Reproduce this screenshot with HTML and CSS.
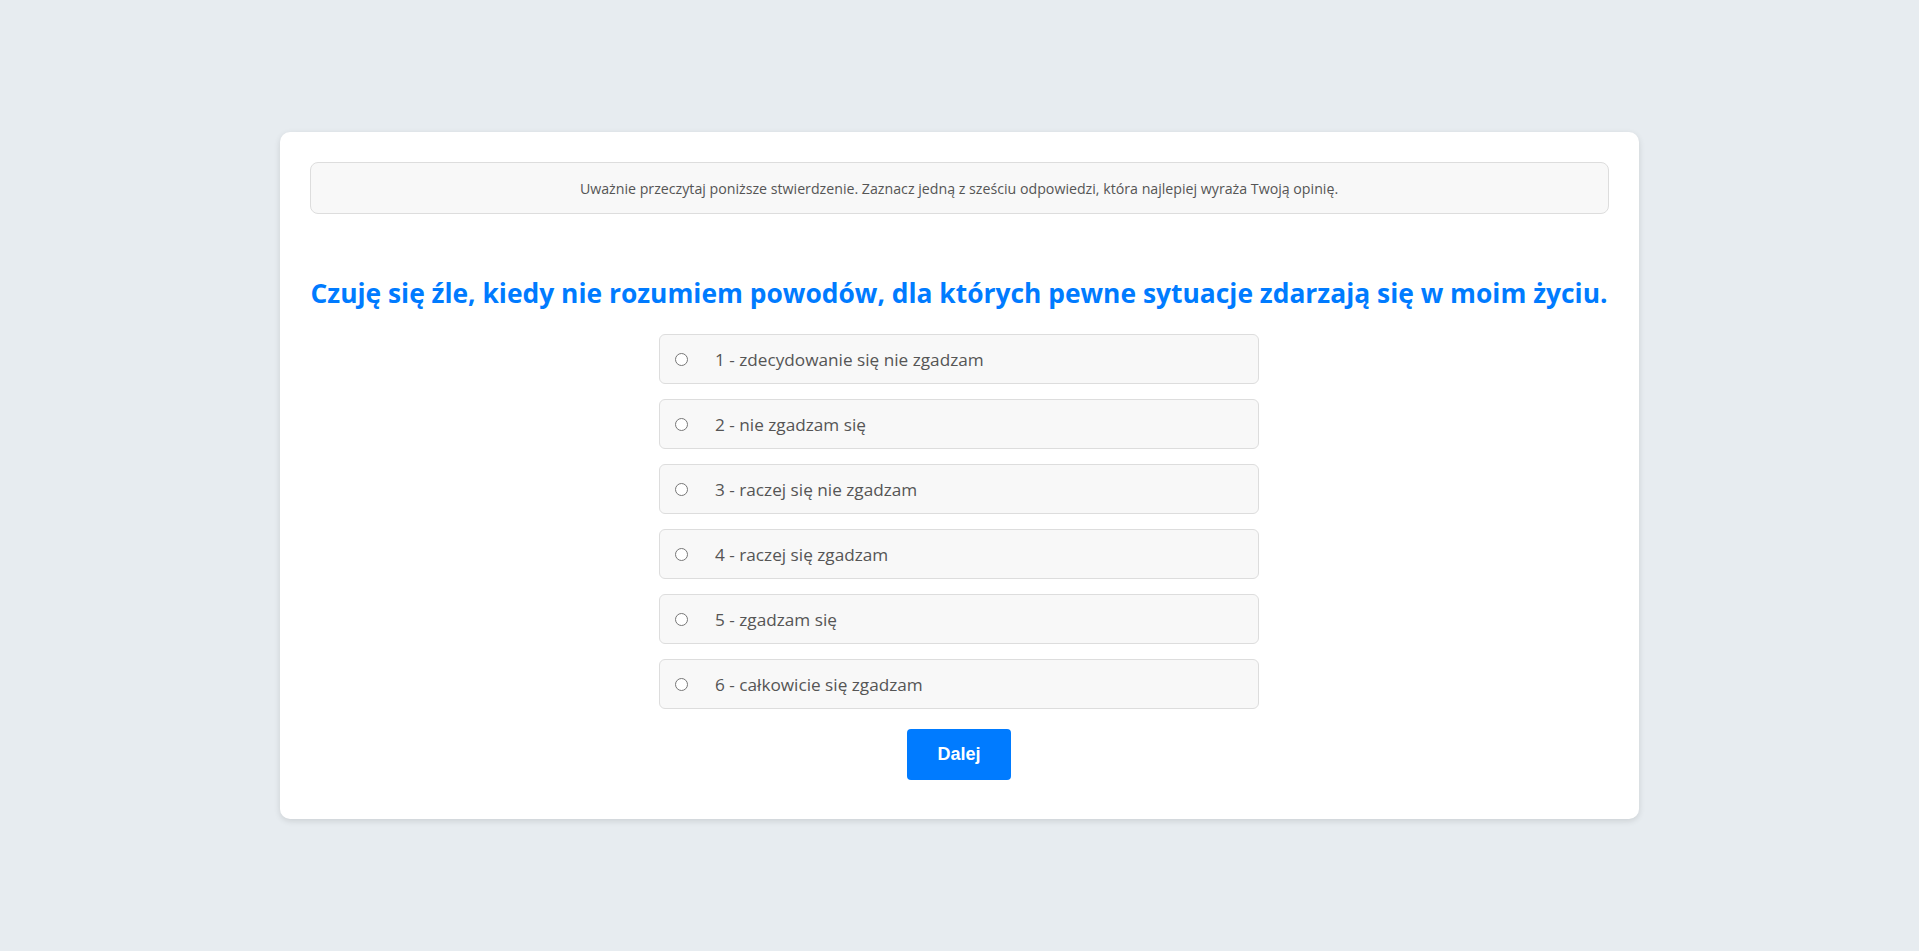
FILE: index.html
```html
<!DOCTYPE html>
<html lang="pl">
<head>
<meta charset="utf-8">
<title>Ankieta</title>
<link rel="stylesheet" href="styles.css">
</head>
<body>
<main class="card">
  <div class="notice">Uważnie przeczytaj poniższe stwierdzenie. Zaznacz jedną z sześciu odpowiedzi, która najlepiej wyraża Twoją opinię.</div>
  <h2 class="question">Czuję się źle, kiedy nie rozumiem powodów, dla których pewne sytuacje zdarzają się w moim życiu.</h2>
  <form class="answers">
    <label class="option"><input type="radio" name="a" value="1"><span>1 - zdecydowanie się nie zgadzam</span></label>
    <label class="option"><input type="radio" name="a" value="2"><span>2 - nie zgadzam się</span></label>
    <label class="option"><input type="radio" name="a" value="3"><span>3 - raczej się nie zgadzam</span></label>
    <label class="option"><input type="radio" name="a" value="4"><span>4 - raczej się zgadzam</span></label>
    <label class="option"><input type="radio" name="a" value="5"><span>5 - zgadzam się</span></label>
    <label class="option"><input type="radio" name="a" value="6"><span>6 - całkowicie się zgadzam</span></label>
    <button type="button" class="next">Dalej</button>
  </form>
</main>
</body>
</html>
```
FILE: styles.css
```css
* { box-sizing: border-box; }
html, body { height: 100%; }
body {
  margin: 0;
  background: #e7ecf0;
  font-family: "Open Sans", "Noto Sans", sans-serif;
  color: #555;
  display: flex;
  align-items: center;
  justify-content: center;
}
.card {
  width: 1359px;
  height: 687px;
  margin-left: -1px;
  background: #fff;
  border-radius: 10px;
  box-shadow: 0 2px 6px rgba(0,0,0,0.12);
  padding: 30px;
  display: flex;
  flex-direction: column;
}
.notice {
  height: 52px;
  background: #f8f8f8;
  border: 1px solid #ddd;
  border-radius: 8px;
  display: flex;
  align-items: center;
  justify-content: center;
  font-size: 14.2px;
  color: #555;
}
.question {
  margin: 57px 0 0;
  height: 63px;
  font-size: 26.4px;
  font-weight: 700;
  color: #007bff;
  text-align: center;
  line-height: 36px;
  padding-top: 4px;
}
.answers {
  display: flex;
  flex-direction: column;
  align-items: center;
  gap: 15px;
}
.option {
  width: 600px;
  height: 50px;
  background: #f8f8f8;
  border: 1px solid #ddd;
  border-radius: 6px;
  display: flex;
  align-items: center;
  padding: 0 15px;
  font-size: 17.2px;
  color: #555;
  cursor: pointer;
}
.option input {
  width: 13px;
  height: 13px;
  margin: 0 27px 0 0;
}
.next {
  margin-top: 5px;
  width: 104px;
  height: 51px;
  background: #007bff;
  color: #fff;
  border: none;
  border-radius: 4px;
  font-family: "Liberation Sans", Arial, sans-serif;
  font-weight: 700;
  font-size: 18px;
  cursor: pointer;
}
```
